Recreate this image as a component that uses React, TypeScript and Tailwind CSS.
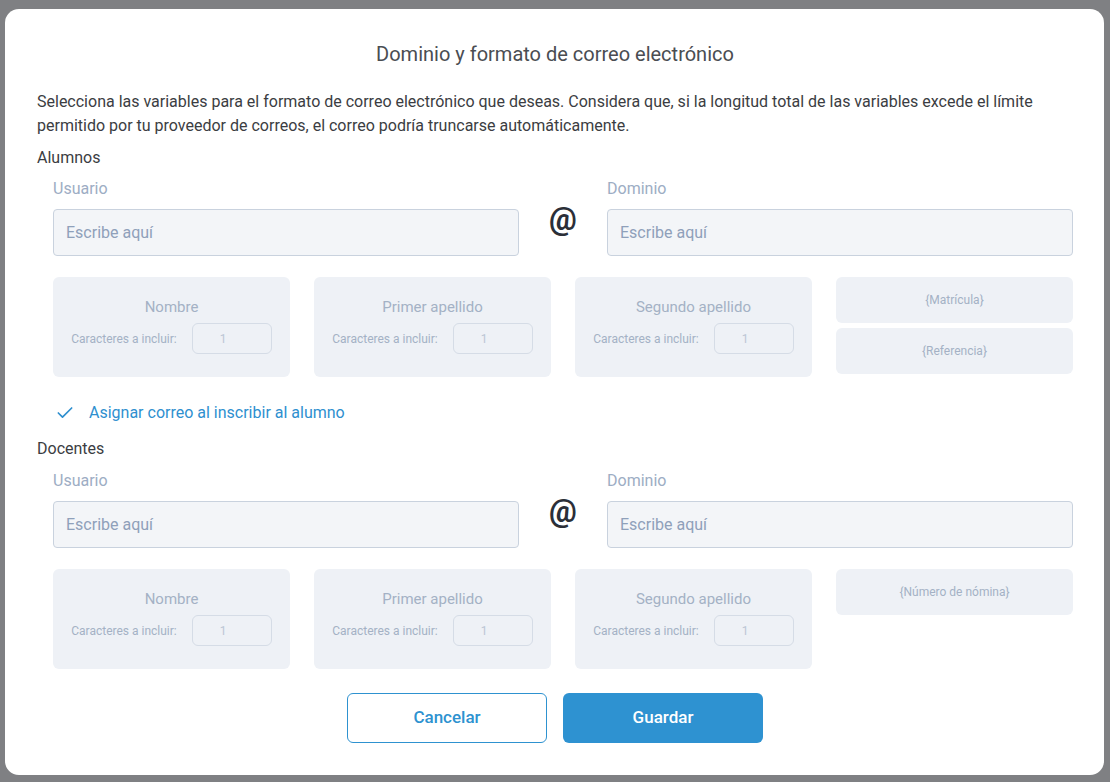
import { Check } from 'lucide-react'

interface VarCard {
    title: string;
}

const nameCards: VarCard[] = [
    { title: 'Nombre' },
    { title: 'Primer apellido' },
    { title: 'Segundo apellido' },
];

const font = { fontFamily: 'Roboto, "Noto Sans", sans-serif' };

const VariableCard = ({ title }: VarCard) => (
    <div className="h-[100px] rounded-md bg-[#eef1f6] flex flex-col items-center pt-[19px]">
        <div className="text-[15px] leading-[22px] text-[#a4b1c5]">{title}</div>
        <div className="mt-[5px] flex items-center gap-[15px]">
            <span className="text-[12px] text-[#a4b1c5]">Caracteres a incluir:</span>
            <div className="w-[80px] h-[31px] rounded-md border border-[#d5dce6] flex items-center pl-[27px] text-[12px] text-[#bcc6d5]">
                1
            </div>
        </div>
    </div>
);

const TagBox = ({ label }: { label: string }) => (
    <div className="h-[46px] rounded-md bg-[#eef1f6] flex items-center justify-center text-[12px] text-[#a4b1c5]">
        {label}
    </div>
);

const EmailRow = () => (
    <div className="grid grid-cols-[1fr_88px_1fr]">
        <div>
            <div className="text-[16px] leading-[24px] text-[#9dadc4]">Usuario</div>
            <div className="mt-[8px] h-[47px] rounded border border-[#c9d2de] bg-[#f3f5f8] flex items-center px-3 text-[16px] text-[#8fa0ba]">
                Escribe aquí
            </div>
        </div>
        <div className="flex justify-center pt-[20px] text-[31px] font-bold text-[#2b2f38]">@</div>
        <div>
            <div className="text-[16px] leading-[24px] text-[#9dadc4]">Dominio</div>
            <div className="mt-[8px] h-[47px] rounded border border-[#c9d2de] bg-[#f3f5f8] flex items-center px-3 text-[16px] text-[#8fa0ba]">
                Escribe aquí
            </div>
        </div>
    </div>
);

const App = () => {
    return (
        <div className="h-[782px] w-[1110px] bg-[#7f8083] pt-[9px] pl-[5px] pr-[6px] overflow-hidden" style={font}>
            <div className="h-[766px] rounded-[14px] bg-white pt-[31px] pl-[32px] pr-[31px]">
                <h2 className="text-center text-[20px] leading-[28px] text-[#4a4d52]">
                    Dominio y formato de correo electrónico
                </h2>

                <p className="mt-[22px] text-[16px] leading-[24px] text-[#3b3d42]">
                    Selecciona las variables para el formato de correo electrónico que deseas. Considera que, si la longitud total de las variables excede el límite permitido por tu proveedor de correos, el correo podría truncarse automáticamente.
                </p>

                <div className="mt-[8px] text-[16px] leading-[24px] text-[#3b3d42]">Alumnos</div>
                <div className="pl-4 mt-[7px]">
                    <EmailRow />
                    <div className="mt-[21px] grid grid-cols-4 gap-6">
                        {nameCards.map((c) => (
                            <VariableCard key={c.title} title={c.title} />
                        ))}
                        <div className="flex flex-col gap-[5px]">
                            <TagBox label="{Matrícula}" />
                            <TagBox label="{Referencia}" />
                        </div>
                    </div>
                    <div className="mt-[24px] flex items-center gap-[14px] text-[16px] leading-[24px] text-[#2e8fcf]">
                        <Check size={20} strokeWidth={2} className="text-[#2e8fcf] ml-[2px]" />
                        <span>Asignar correo al inscribir al alumno</span>
                    </div>
                </div>

                <div className="mt-[12px] text-[16px] leading-[24px] text-[#3b3d42]">Docentes</div>
                <div className="pl-4 mt-[8px]">
                    <EmailRow />
                    <div className="mt-[21px] grid grid-cols-4 gap-6 items-start">
                        {nameCards.map((c) => (
                            <VariableCard key={c.title} title={c.title} />
                        ))}
                        <TagBox label="{Número de nómina}" />
                    </div>
                </div>

                <div className="mt-[24px] flex justify-center gap-4">
                    <button className="w-[200px] h-[50px] rounded-md border border-[#2e92d0] bg-white text-[17px] font-medium text-[#2e92d0]">
                        Cancelar
                    </button>
                    <button className="w-[200px] h-[50px] rounded-md bg-[#2e92d1] text-[17px] font-medium text-white">
                        Guardar
                    </button>
                </div>
            </div>
        </div>
    )
}

export default App
